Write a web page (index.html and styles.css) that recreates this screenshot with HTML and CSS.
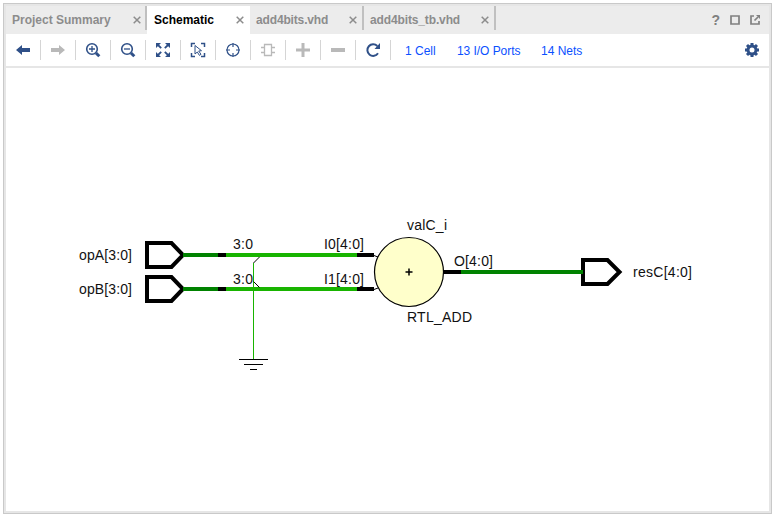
FILE: index.html
```html
<!DOCTYPE html>
<html lang="en">
<head>
<meta charset="utf-8">
<title>Schematic</title>
<link rel="stylesheet" href="styles.css">
</head>
<body>
<main class="panel">
  <header class="tabs">
    <div class="tab tab-summary"><span class="name">Project Summary</span><svg class="close" viewBox="0 0 8 8"><path d="M.7.7l6.6 6.6M7.3.7L.7 7.3"/></svg></div>
    <div class="tab tab-schematic active"><span class="name">Schematic</span><svg class="close" viewBox="0 0 8 8"><path d="M.7.7l6.6 6.6M7.3.7L.7 7.3"/></svg></div>
    <div class="tab tab-source"><span class="name">add4bits.vhd</span><svg class="close" viewBox="0 0 8 8"><path d="M.7.7l6.6 6.6M7.3.7L.7 7.3"/></svg></div>
    <div class="tab tab-bench"><span class="name">add4bits_tb.vhd</span><svg class="close" viewBox="0 0 8 8"><path d="M.7.7l6.6 6.6M7.3.7L.7 7.3"/></svg></div>
    <div class="window-tools">
      <span class="help">?</span>
      <svg width="10" height="10"><path d="M1 1h8v8H1z"/></svg>
      <svg class="float" width="10" height="10"><path d="M4 1H1v8h8V6M4.500 5.500L8 2"/><path class="tip" d="M6 0h4v4z"/></svg>
    </div>
  </header>
  <nav class="toolbar">
    <span class="tool"><svg viewBox="0 0 16 16"><path class="solid" d="M1 8l6-5v3h8v4H7v3z"/></svg></span>
    <span class="tool off"><svg viewBox="0 0 16 16"><path class="solid" d="M15 8L9 3v3H1v4h8v3z"/></svg></span>
    <span class="tool"><svg viewBox="0 0 16 16"><circle cx="7" cy="7" r="5.300" stroke-width="1.600"/><path d="M4 7h6M7 4v6" stroke-width="1.300"/><path d="M11 11l3.300 3.300" stroke-width="3"/></svg></span>
    <span class="tool"><svg viewBox="0 0 16 16"><circle cx="7" cy="7" r="5.300" stroke-width="1.600"/><path d="M4 7h6" stroke-width="1.300"/><path d="M11 11l3.300 3.300" stroke-width="3"/></svg></span>
    <span class="tool"><svg viewBox="0 0 16 16"><path class="solid" d="M1 1h5L1 6zM10 1h5v5zM1 10l5 5H1zM15 10v5h-5z"/><path d="M3 3l3.200 3.200M13 3L9.800 6.200M3 13l3.200-3.200M13 13L9.800 9.800" stroke-width="1.800"/></svg></span>
    <span class="tool"><svg viewBox="0 0 16 16"><path d="M1.500 5V1.500H5M11 1.500h3.500V5M1.500 11v3.500H5M11 14.500h3.500V11" stroke-width="1.500"/><path d="M5 3.500l6.500 5.200-2.800.3 2.300 3.300-1.600 1.100L7.300 10 5 12z"/></svg></span>
    <span class="tool"><svg viewBox="0 0 16 16"><circle cx="8" cy="8" r="6" stroke-width="1.200"/><path d="M8 1v4M8 11v4M1 8h4M11 8h4" stroke-width="1.200"/></svg></span>
    <span class="tool off"><svg viewBox="0 0 16 16"><path d="M4.500 2.500h7v11h-7zM1 5.500h3.500M1 10.500h3.500M11.500 5.500H15M11.500 10.500H15" stroke-width="1.300"/></svg></span>
    <span class="tool off"><svg viewBox="0 0 16 16"><path d="M8 1v14M1 8h14" stroke-width="3"/></svg></span>
    <span class="tool off"><svg viewBox="0 0 16 16"><path d="M1 8h14" stroke-width="4"/></svg></span>
    <span class="tool"><svg viewBox="0 0 16 16"><path d="M13 11.300A5.800 5.800 0 1 1 12.300 4" stroke-width="2"/><path class="solid" d="M15 1v6H9.500z"/></svg></span>
    <a class="link cells">1 Cell</a><a class="link ports">13 I/O Ports</a><a class="link nets">14 Nets</a>
    <svg class="gear" viewBox="-8 -8 16 16"><circle r="4" stroke-width="3"/><path d="M0-7v2M0 5v2M-7 0h2M5 0h2M-5-5l1.500 1.500M3.500 3.500L5 5M5-5L3.500-3.500M-3.500 3.500L-5 5" stroke-width="3"/></svg>
  </nav>
  <section class="canvas">
    <svg class="schematic" viewBox="6 68 763 443">
      <g class="port">
        <path d="M147 243h24.500l11.500 12-11.500 12H147z"/>
        <path d="M147 277h24.500l11.500 12-11.500 12H147z"/>
        <path d="M583 260h24.500l12 12-12 12H583z"/>
      </g>
      <path class="bus" d="M183 255h35M183 289h35M461 272h122"/>
      <path class="bus lit" d="M226 255h131M226 289h131"/>
      <path class="bus pin" d="M218 255h8M218 289h8M357 255h17M357 289h17M443 272h18"/>
      <path class="wire" d="M253.500 263v96"/>
      <path class="thin" d="M253.500 263l6-6M253.500 281.500l6 6M239 359.500h29M244 364.500h19M250 369.500h7M374 255.500l4 1.500M374 289.500l4-1.500"/>
      <circle class="adder" cx="409" cy="272" r="34.500"/>
      <path class="plus" d="M405.500 272h7M409 268.500v7"/>
      <g class="label">
        <text x="79" y="260" textLength="53">opA[3:0]</text>
        <text x="79" y="294" textLength="53">opB[3:0]</text>
        <text x="233" y="249" textLength="20">3:0</text>
        <text x="233" y="284" textLength="20">3:0</text>
        <text x="324" y="249" textLength="40">I0[4:0]</text>
        <text x="324" y="284" textLength="40">I1[4:0]</text>
        <text x="407" y="230" textLength="40">valC_i</text>
        <text x="407" y="322" textLength="65">RTL_ADD</text>
        <text x="454" y="266" textLength="39">O[4:0]</text>
        <text x="633" y="277" textLength="59">resC[4:0]</text>
      </g>
    </svg>
  </section>
</main>
</body>
</html>
```
FILE: styles.css
```css
* { box-sizing: border-box; }
body {
  margin: 0;
  padding: 3px 2px 1px 3px;
  height: 515px;
  background: #fff;
  font-family: "Liberation Sans", Arial, sans-serif;
  font-size: 12px;
  overflow: hidden;
}
svg { display: block; flex: none; fill: none; }
.panel {
  display: flex;
  flex-direction: column;
  width: 769px;
  height: 511px;
  border: 1px solid #c9c9c9;
  background: #e6e6e6;
  padding: 2px;
}
.tabs { display: flex; height: 28px; background: #ececec; }
.tab {
  position: relative;
  display: flex;
  align-items: center;
  justify-content: space-between;
  height: 28px;
  padding-left: 6px;
  color: #8c8c8c;
  font-weight: bold;
  white-space: nowrap;
}
.tab:not(.active)::after {
  content: "";
  position: absolute;
  top: 0;
  right: 0;
  width: 2px;
  height: 24px;
  background: #c0c0c0;
}
.tab-summary { width: 141px; padding-right: 6px; }
.tab-schematic { width: 103px; padding-left: 7px; padding-right: 6px; background: #fff; }
.tab.active { color: #000; }
.tab-source { width: 114px; padding-right: 7px; }
.tab-bench { width: 132px; padding-right: 7px; }
.tab-source .name { letter-spacing: -.15px; }
.tab-bench .name { letter-spacing: -.13px; }
.close { width: 8px; height: 8px; stroke: #8c8c8c; stroke-width: 1.5; }
.window-tools {
  display: flex;
  align-items: center;
  gap: 10px;
  margin-left: auto;
  padding-right: 9px;
  stroke: #808080;
  stroke-width: 1.7;
}
.help { color: #808080; font-size: 14px; font-weight: bold; stroke: none; }
.float .tip { fill: #808080; stroke: none; }
.toolbar {
  display: flex;
  align-items: center;
  height: 32px;
  background: #fff;
  color: #2f5088;
}
.tool {
  display: flex;
  align-items: center;
  justify-content: center;
  width: 35px;
  height: 20px;
  border-right: 1px solid #d5d5d5;
}
.tool svg { width: 16px; height: 16px; stroke: currentColor; stroke-width: 1; }
.tool .solid { fill: currentColor; stroke: none; }
.off { color: #b9b9b9; }
.link { position: relative; top: 1px; color: #0a50ff; white-space: nowrap; }
.cells { width: 52px; margin-left: 14px; }
.ports { width: 84px; letter-spacing: -.05px; }
.gear { width: 16px; height: 16px; margin-left: auto; margin-right: 9px; stroke: #2f5088; }
.canvas { margin-top: 2px; height: 443px; background: #fff; }
.schematic { width: 763px; height: 443px; }
.port { stroke: #000; stroke-width: 4; }
.bus { stroke: #008200; stroke-width: 4; }
.bus.lit { stroke: #18b400; }
.bus.pin { stroke: #000; }
.wire { stroke: #18b400; }
.thin { stroke: #000; }
.adder { fill: #ffffcb; stroke: #000; stroke-width: 1.2; }
.plus { stroke: #000; stroke-width: 1.5; }
.label { fill: #111; font-size: 14px; }
```
